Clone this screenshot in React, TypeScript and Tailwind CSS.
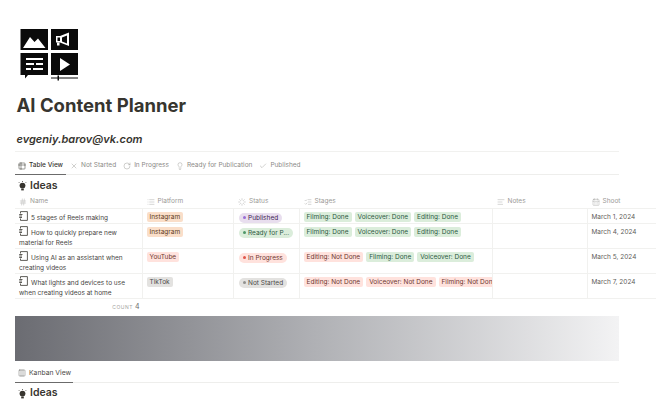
import { CalendarDays, Check, Columns3, Hash, List, Loader, RotateCw, Table2, X, AlignLeft, ListChecks, LightbulbIcon } from "lucide-react";
import type { ReactNode } from "react";

type Tone = "orange" | "red" | "gray" | "green" | "purple";

const tagTones: Record<Tone, string> = {
  orange: "bg-[#fadec9] text-[#5c3b23]",
  red: "bg-[#ffe2dd] text-[#6e3630]",
  gray: "bg-[#e3e2e0] text-[#4a4a48]",
  green: "bg-[#dbeddb] text-[#2b593f]",
  purple: "bg-[#e8deee] text-[#412454]",
};

const dotTones: Record<Tone, string> = {
  orange: "bg-[#cc772f]",
  red: "bg-[#e0564c]",
  gray: "bg-[#91918e]",
  green: "bg-[#4f9768]",
  purple: "bg-[#9a6dd7]",
};

const columns = "grid grid-cols-[127.5px_91.5px_65.5px_193px_95px_70px]";

const rows = [
  {
    name: "5 stages of Reels making",
    platform: ["Instagram", "orange"],
    status: ["Published", "purple"],
    stages: [["Filming: Done", "green"], ["Voiceover: Done", "green"], ["Editing: Done", "green"]],
    shoot: "March 1, 2024",
    height: "h-[15px]",
  },
  {
    name: "How to quickly prepare new material for Reels",
    platform: ["Instagram", "orange"],
    status: ["Ready for P...", "green"],
    stages: [["Filming: Done", "green"], ["Voiceover: Done", "green"], ["Editing: Done", "green"]],
    shoot: "March 4, 2024",
    height: "h-[25px]",
  },
  {
    name: "Using AI as an assistant when creating videos",
    platform: ["YouTube", "red"],
    status: ["In Progress", "red"],
    stages: [["Editing: Not Done", "red"], ["Filming: Done", "green"], ["Voiceover: Done", "green"]],
    shoot: "March 5, 2024",
    height: "h-[25px]",
  },
  {
    name: "What lights and devices to use when creating videos at home",
    platform: ["TikTok", "gray"],
    status: ["Not Started", "gray"],
    stages: [["Editing: Not Done", "red"], ["Voiceover: Not Done", "red"], ["Filming: Not Done", "red"]],
    shoot: "March 7, 2024",
    height: "h-[25px]",
  },
] as const;

function Logo() {
  return (
    <svg width="60" height="52" viewBox="0 0 60 52" className="block">
      <rect x="0.5" y="0" width="27.5" height="21" fill="#0a0a0a" />
      <path d="M3 19 L10 8 L14.5 13 L18 9.5 L25.5 19 Z" fill="#fff" />
      <rect x="31" y="0" width="27" height="21" fill="#0a0a0a" />
      <path d="M40 7 L49 3.5 V17 L40 13.5 H36 V7 Z M37.5 8.5 V12 H40 V8.5 Z M42 8.5 V12.5 L47 14.5 V6.5 Z" fill="#fff" fillRule="evenodd" />
      <path d="M37 13.5 H39.5 V16.5 H37 Z" fill="#fff" />
      <path d="M0.5 24 H28 V46 H8 L5 49.5 V46 H0.5 Z" fill="#0a0a0a" />
      <path d="M6 29 H23 V31 H6 Z M6 34 H14 V36 H6 Z M16 34 H23 V36 H16 Z M6 39 H11 V41 H6 Z M13 39 H23 V41 H13 Z" fill="#fff" />
      <rect x="31" y="24" width="27" height="22" fill="#0a0a0a" />
      <path d="M40 29 L50 35.5 L40 42 Z" fill="#fff" />
      <path d="M31 48.5 H58 V49.5 H31 Z M37.5 46.5 H39 V51.5 H37.5 Z" fill="#0a0a0a" />
    </svg>
  );
}

function DocIcon() {
  return (
    <svg width="9" height="10" viewBox="0 0 9 10" fill="none" stroke="#37352f" strokeWidth="0.8" className="mr-[3px] inline-block align-[-1.5px]">
      <path d="M1.5 2.5 V0.6 H8.4 V9.4 H1.5 V7.5 M0.2 5 H3 M3.5 3.5 H0.2 M0.2 6.5 H3" />
    </svg>
  );
}

function IdeasIcon() {
  return (
    <svg width="9" height="10" viewBox="0 0 9 10" className="shrink-0">
      <circle cx="4.5" cy="4.6" r="2.9" fill="#37352f" />
      <rect x="3.2" y="7.6" width="2.6" height="1.8" fill="#37352f" />
      <path d="M4.5 0 V1 M0.8 1.2 L1.6 2 M8.2 1.2 L7.4 2" stroke="#37352f" strokeWidth="0.7" />
    </svg>
  );
}

function Tag({ label, tone }: { label: string; tone: Tone }) {
  return <span className={`inline-block h-[10px] shrink-0 whitespace-nowrap rounded-[2px] px-[3px] text-[6.5px] leading-[10px] ${tagTones[tone]}`}>{label}</span>;
}

function StatusTag({ label, tone }: { label: string; tone: Tone }) {
  return (
    <span className={`inline-flex h-[10px] items-center gap-[2px] whitespace-nowrap rounded-full px-[4px] text-[6.5px] leading-[10px] ${tagTones[tone]}`}>
      <span className={`h-[3px] w-[3px] rounded-full ${dotTones[tone]}`} />
      {label}
    </span>
  );
}

function HeaderCell({ icon, label, className = "" }: { icon: ReactNode; label: string; className?: string }) {
  return (
    <div className={`flex h-[13px] items-center gap-[3px] px-[4px] pt-px text-[6.5px] text-[#9b9a97] ${className}`}>
      {icon}
      {label}
    </div>
  );
}

function ViewTab({ icon, label, active = false }: { icon: ReactNode; label: string; active?: boolean }) {
  return (
    <div className={`-mb-px flex h-[23px] items-center gap-[3px] px-[3px] pt-[5px] text-[6.5px] ${active ? "border-b border-[#6b6b6b] font-medium text-[#37352f]" : "text-[#8b8a87]"}`}>
      {icon}
      {label}
    </div>
  );
}

export default function App() {
  return (
    <div className="h-[407px] w-[656px] overflow-hidden bg-white pl-[15px] font-['Inter',sans-serif] text-[#37352f]">
      <div className="w-[604px]">
        <div className="pl-[4.5px] pt-[29px]">
          <Logo />
        </div>
        <h1 className="ml-[1.5px] mt-[12px] text-[18.5px] font-bold leading-[24px] text-[#37352f]">AI Content Planner</h1>
        <p className="ml-[1.5px] mt-[15px] text-[11px] font-semibold italic leading-[14px]">evgeniy.barov@vk.com</p>
        <div className="mt-[5px] h-px bg-[#f1f1ef]" />

        <div className="flex gap-[1px] border-b border-[#eeeeec]">
          <ViewTab active label="Table View" icon={<Table2 size={8} strokeWidth={1.5} />} />
          <ViewTab label="Not Started" icon={<X size={8} strokeWidth={1.2} />} />
          <ViewTab label="In Progress" icon={<RotateCw size={8} strokeWidth={1.2} />} />
          <ViewTab label="Ready for Publication" icon={<LightbulbIcon size={8} strokeWidth={1.2} />} />
          <ViewTab label="Published" icon={<Check size={8} strokeWidth={1.2} />} />
        </div>

        <div className="flex h-[20px] items-center gap-[3px] pl-[3px] pt-[2px] text-[10.5px] font-semibold leading-none">
          <IdeasIcon />
          Ideas
        </div>

        <div className={`${columns} w-[642.5px] border-b border-[#f1f1ef]`}>
          <HeaderCell icon={<Hash size={8} strokeWidth={1.2} />} label="Name" />
          <HeaderCell icon={<List size={8} strokeWidth={1.2} />} label="Platform" />
          <HeaderCell icon={<Loader size={8} strokeWidth={1.2} />} label="Status" />
          <HeaderCell icon={<ListChecks size={8} strokeWidth={1.2} />} label="Stages" />
          <HeaderCell icon={<AlignLeft size={8} strokeWidth={1.2} />} label="Notes" />
          <HeaderCell icon={<CalendarDays size={8} strokeWidth={1.2} />} label="Shoot" />
        </div>

        {rows.map((row) => (
          <div key={row.name} className={`${columns} ${row.height} w-[642.5px] border-b border-[#f1f1ef] text-[6.5px] leading-[10.5px]`}>
            <div className="border-r border-[#f1f1ef] pl-[4px] pr-[2px] pt-[2px] text-[#47453f]">
              <DocIcon />
              {row.name}
            </div>
            <div className="border-r border-[#f1f1ef] pl-[4px] pt-[3px]">
              <Tag label={row.platform[0]} tone={row.platform[1]} />
            </div>
            <div className="border-r border-[#f1f1ef] pl-[5px] pt-[3px]">
              <StatusTag label={row.status[0]} tone={row.status[1]} />
            </div>
            <div className="flex gap-[3px] overflow-hidden border-r border-[#f1f1ef] pl-[4px] pt-[3px]">
              {row.stages.map(([label, tone]) => (
                <Tag key={label} label={label} tone={tone} />
              ))}
            </div>
            <div className="border-r border-[#f1f1ef]" />
            <div className="pl-[4px] pt-[3px] text-[#5f5e5b]">{row.shoot}</div>
          </div>
        ))}

        <div className="flex h-[16px] w-[127.5px] items-center justify-end gap-[2px] pr-[3px] pt-px">
          <span className="text-[5px] tracking-[0.5px] text-[#a5a4a1]">COUNT</span>
          <span className="text-[7px] text-[#6b6a67]">4</span>
        </div>

        <div className="mt-[1px] h-[45px] bg-gradient-to-r from-[#6b6c72] via-[#b0b1b5] to-[#f3f3f4]" />

        <div className="flex border-b border-[#eeeeec]">
          <div className="-mb-px flex h-[22px] w-[58px] items-center gap-[3px] border-b border-[#6b6b6b] pl-[3px] pt-[3px] text-[6.8px] text-[#4a4945]">
            <Columns3 size={8} strokeWidth={1.2} />
            Kanban View
          </div>
        </div>

        <div className="flex h-[21px] items-center gap-[3px] pl-[3px] text-[10.5px] font-semibold leading-none">
          <IdeasIcon />
          Ideas
        </div>
      </div>
    </div>
  );
}
